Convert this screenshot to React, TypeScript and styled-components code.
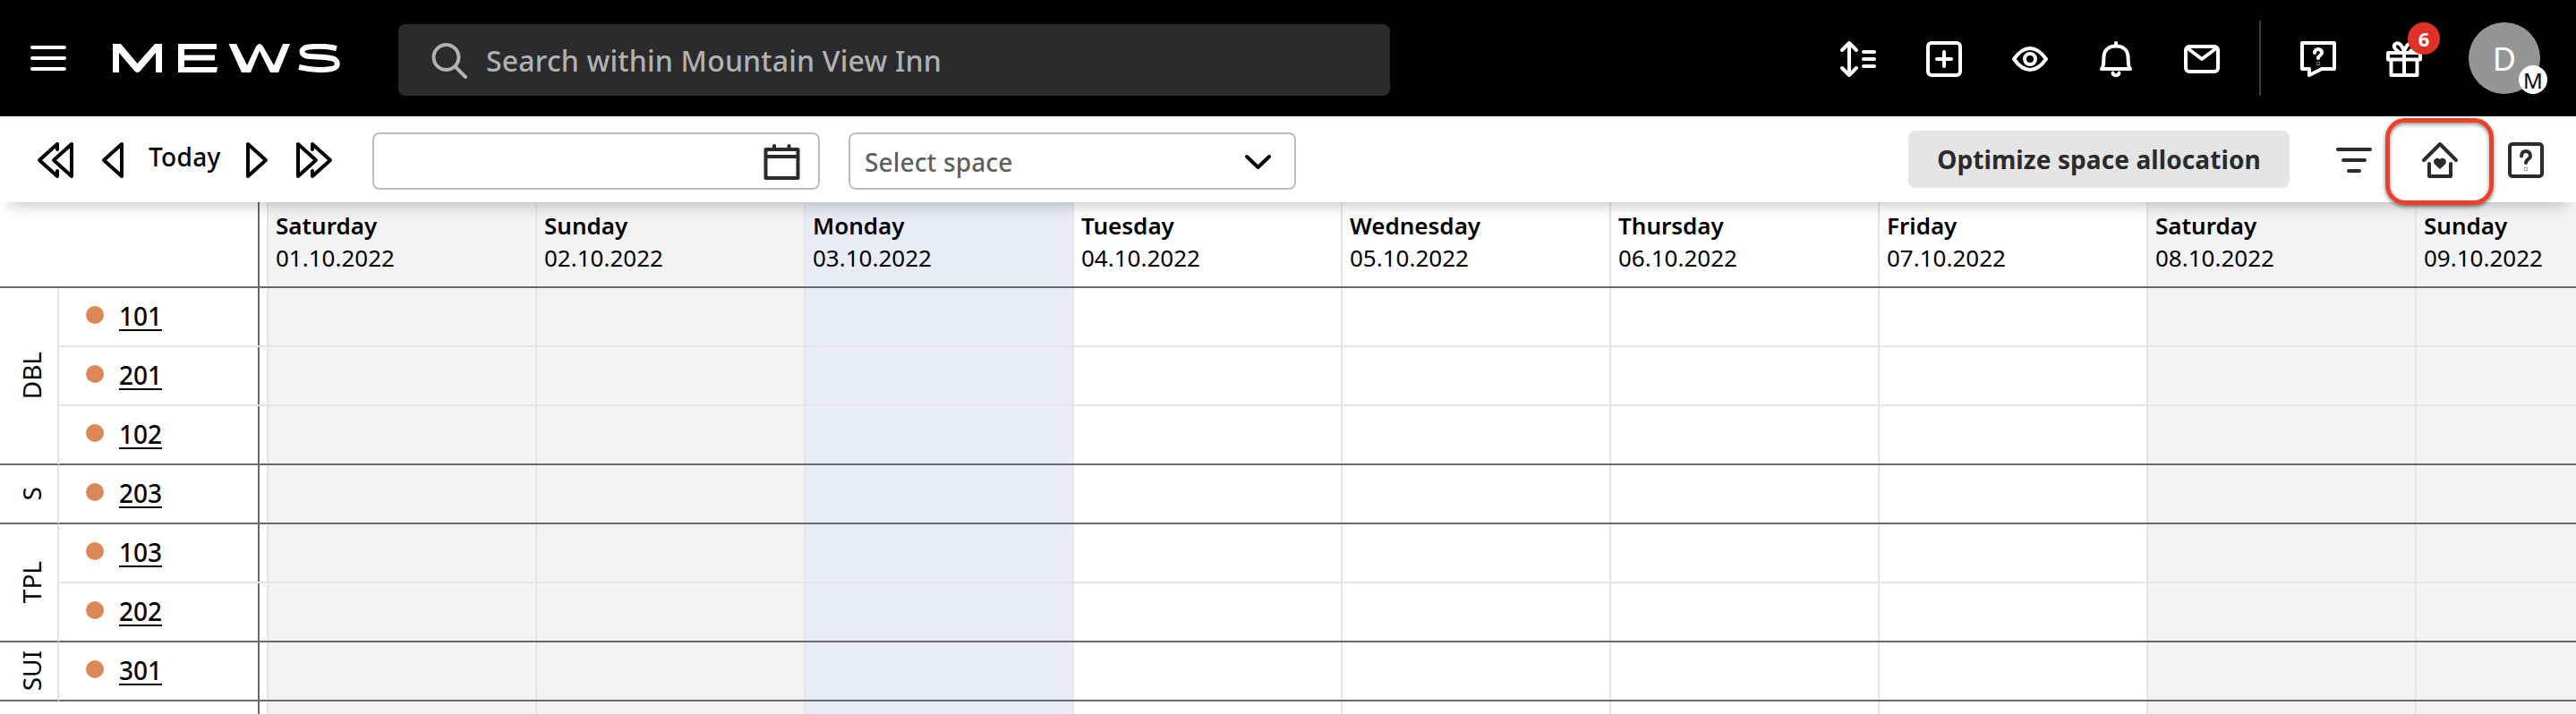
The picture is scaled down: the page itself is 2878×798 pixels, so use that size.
import * as React from 'react';
import styled, { createGlobalStyle } from 'styled-components';

interface Day {
    name: string;
    date: string;
    kind?: 'weekend' | 'today';
}

interface SpaceGroup {
    label: string;
    spaces: string[];
}

const days: Day[] = [
    { name: 'Saturday', date: '01.10.2022', kind: 'weekend' },
    { name: 'Sunday', date: '02.10.2022', kind: 'weekend' },
    { name: 'Monday', date: '03.10.2022', kind: 'today' },
    { name: 'Tuesday', date: '04.10.2022' },
    { name: 'Wednesday', date: '05.10.2022' },
    { name: 'Thursday', date: '06.10.2022' },
    { name: 'Friday', date: '07.10.2022' },
    { name: 'Saturday', date: '08.10.2022', kind: 'weekend' },
    { name: 'Sunday', date: '09.10.2022', kind: 'weekend' },
];

const groups: SpaceGroup[] = [
    { label: 'DBL', spaces: ['101', '201', '102'] },
    { label: 'S', spaces: ['203'] },
    { label: 'TPL', spaces: ['103', '202'] },
    { label: 'SUI', spaces: ['301'] },
];

const DayCells = () => (
    <Cells>
        {days.map((day) => (
            <Cell key={day.date} $kind={day.kind} />
        ))}
    </Cells>
);

export default function App() {
    return (
        <Page>
            <GlobalStyle />
            <Header>
                <MenuButton aria-label="Menu">
                    <Icon width="40" height="28" viewBox="0 0 40 28">
                        <path d="M2 2H38M2 14H38M2 26H38" />
                    </Icon>
                </MenuButton>
                <Logo width="254" height="32" viewBox="0 0 254 32" aria-label="Mews">
                    <path d="M0 32V0H9L27.5 22L47 0H55V32H48V10L31 30Q27.500 34 24 30L7 10V32Z" />
                    <path d="M73 0H116V6H80V12.500H114V18.500H80V26H117L116 32H73Z" />
                    <path d="M129.500 0H138L150 24L160 3Q164 -3 168 3L180 24L190 0H198L185 32H176L164 8L154 32H144Z" />
                    <path
                        d="M250 5C239 2.500 227 2.500 219 3.500C209 4.500 209 13 219 14C228 15 234 14 244 16C253 18 253 27 244 28C233 30 221 29 208 26"
                        fill="none"
                        stroke="#fff"
                        strokeWidth="6"
                    />
                </Logo>
                <Search>
                    <Icon width="40" height="40" viewBox="0 0 40 40">
                        <circle cx="16.500" cy="16" r="14" />
                        <path d="M27 27L38 38" />
                    </Icon>
                    <span>Search within Mountain View Inn</span>
                </Search>
                <HeaderActions>
                    <Icon width="40" height="40" viewBox="0 0 40 40">
                        <path d="M10 2V38M2 10L10 2L18 10M2 30L10 38L18 30M26 12H38M26 20H38M26 28H38" />
                    </Icon>
                    <Icon width="40" height="40" viewBox="0 0 40 40">
                        <rect x="2" y="2" width="36" height="36" rx="4" />
                        <path d="M20 12V28M12 20H28" />
                    </Icon>
                    <Icon width="40" height="40" viewBox="0 0 40 40">
                        <path d="M2 20C7 13 13 8 20 8S33 13 38 20C33 27 27 32 20 32S7 27 2 20Z" />
                        <circle cx="20" cy="20" r="6" />
                    </Icon>
                    <Icon width="40" height="40" viewBox="0 0 40 40">
                        <path d="M20 2V5M4 31H36C33 28 34 22 33.500 17C33 9 27 5.500 20 5.500S7 9 6.500 17C6 22 7 28 4 31Z" />
                        <path d="M16.500 35.500C17 39 23 39 23.500 35.500" />
                    </Icon>
                    <Icon width="40" height="40" viewBox="0 0 40 40">
                        <rect x="2" y="6" width="36" height="28" rx="4" />
                        <path d="M4 8L20 20L36 8" />
                    </Icon>
                    <Divider />
                    <Icon width="40" height="40" viewBox="0 0 40 40">
                        <path d="M2 2H38V31H24L10 38V31H2Z" />
                        <path d="M16 13C16 7.500 24 7.500 24 13C24 16 20 16 20 19" />
                        <circle cx="20" cy="25" r=".2" />
                    </Icon>
                    <Gift>
                        <Icon width="40" height="40" viewBox="0 0 40 40">
                            <path d="M2 13H38V20.500H2ZM5.500 21V38H34.500V21M20 13V38" />
                            <path d="M20 11C18 6 15 1 11 2.500C7 4.500 9 9 13 11M20 11C22 6 25 1 29 2.500C33 4.500 31 9 27 11" />
                        </Icon>
                        <Count>6</Count>
                    </Gift>
                    <Avatar>
                        D
                        <AvatarMark>M</AvatarMark>
                    </Avatar>
                </HeaderActions>
            </Header>

            <Toolbar>
                <DateNav>
                    <Icon width="40" height="40" viewBox="0 0 40 40">
                        <path d="M38 2V38L18 20ZM22 8V2L2 20L22 38V32" />
                    </Icon>
                    <Icon width="24" height="40" viewBox="0 0 24 40">
                        <path d="M22 2V38L2 20Z" />
                    </Icon>
                    <Today>Today</Today>
                    <Icon width="24" height="40" viewBox="0 0 24 40">
                        <path d="M2 2V38L22 20Z" />
                    </Icon>
                    <Icon width="40" height="40" viewBox="0 0 40 40">
                        <path d="M2 2V38L22 20ZM18 8V2L38 20L18 38V32" />
                    </Icon>
                </DateNav>
                <Field>
                    <Icon width="40" height="40" viewBox="0 0 40 40" $color="#2b2b2d">
                        <path d="M1.500 7H37.500V39H1.500ZM1.500 15H37.500M11 3V7M27.500 3V7" />
                    </Icon>
                </Field>
                <Field>
                    <Placeholder>Select space</Placeholder>
                    <Icon width="40" height="40" viewBox="0 0 40 40" $color="#000">
                        <path d="M7 15L19.500 27L32 15" />
                    </Icon>
                </Field>
                <OptimizeButton>Optimize space allocation</OptimizeButton>
                <ToolbarIcons>
                    <Icon width="40" height="40" viewBox="0 0 40 40" $color="#2b2b2d">
                        <path d="M2 8H38M8 20H32M14 32H26" />
                    </Icon>
                    <Highlighted>
                        <Icon width="40" height="40" viewBox="0 0 40 40" $color="#2b2b2d">
                            <path d="M2 20L20 2L38 20M8 24V38H32V24" />
                            <Heart d="M20 30L14.500 25C10.500 20.500 16 15.500 20 19C24 15.500 29.500 20.500 25.500 25Z" />
                        </Icon>
                    </Highlighted>
                    <Icon width="40" height="40" viewBox="0 0 40 40" $color="#2b2b2d">
                        <rect x="2" y="2" width="36" height="36" rx="3" />
                        <path d="M15 15.500C15 8 25 8 25 15.500C25 19 20 19 20 23" />
                        <circle cx="20" cy="30" r=".2" />
                    </Icon>
                </ToolbarIcons>
            </Toolbar>

            <Timeline>
                <TimelineHead>
                    <Corner />
                    <Cells>
                        {days.map((day) => (
                            <Cell key={day.date} $kind={day.kind}>
                                <DayName>{day.name}</DayName>
                                <DayDate>{day.date}</DayDate>
                            </Cell>
                        ))}
                    </Cells>
                </TimelineHead>
                {groups.map((group) => (
                    <Group key={group.label}>
                        <GroupLabel>
                            <span>{group.label}</span>
                        </GroupLabel>
                        <Rows>
                            {group.spaces.map((space) => (
                                <Row key={space}>
                                    <Space>
                                        <Dot />
                                        <SpaceLink>{space}</SpaceLink>
                                    </Space>
                                    <DayCells />
                                </Row>
                            ))}
                        </Rows>
                    </Group>
                ))}
                <TimelineEnd>
                    <Corner />
                    <DayCells />
                </TimelineEnd>
            </Timeline>
        </Page>
    );
}

const GlobalStyle = createGlobalStyle`
    *, *::before, *::after {
        box-sizing: border-box;
    }

    body {
        margin: 0;
        background: #fff;
        color: #000;
        font-family: 'Noto Sans', 'Open Sans', sans-serif;
    }
`;

const Page = styled.div`
    display: flex;
    flex-direction: column;
    width: 2878px;
    height: 798px;
    overflow: hidden;
`;

const Icon = styled.svg<{ $color?: string }>`
    display: block;
    flex: none;
    overflow: visible;
    fill: none;
    stroke: ${({ $color }) => $color || 'currentColor'};
    stroke-width: 4px;
    stroke-linecap: round;
    stroke-linejoin: round;
`;

const Heart = styled.path`
    fill: #2b2b2d;
    stroke: none;
`;

const Header = styled.header`
    display: flex;
    align-items: center;
    flex: none;
    height: 130px;
    padding: 0 40px 0 34px;
    background: #000;
    color: #fff;
`;

const MenuButton = styled.button`
    padding: 0;
    border: none;
    background: none;
    color: #fff;
`;

const Logo = styled.svg`
    margin-left: 52px;
    fill: #fff;
`;

const Search = styled.div`
    display: flex;
    align-items: center;
    gap: 21px;
    width: 1108px;
    height: 80px;
    margin: 4px 0 0 65px;
    padding: 1px 0 0 37px;
    border-radius: 8px;
    background: #2b2b2d;
    color: #b1b1b1;
    font-size: 32px;
    font-weight: 500;
    letter-spacing: 0.18px;
`;

const HeaderActions = styled.div`
    display: flex;
    align-items: center;
    gap: 56px;
    margin-left: auto;

    > svg {
        margin-top: 2px;
    }
`;

const Divider = styled.div`
    width: 2px;
    height: 84px;
    margin: 0 -12px;
    background: #3a3a3a;
`;

const Gift = styled.div`
    position: relative;
    margin: 2px -4px 0 0;
`;

const Count = styled.span`
    position: absolute;
    top: -21px;
    left: 24px;
    width: 36px;
    height: 36px;
    border-radius: 50%;
    background: #de3226;
    font-size: 22px;
    font-weight: 700;
    line-height: 36px;
    text-align: center;
`;

const Avatar = styled.div`
    position: relative;
    width: 80px;
    height: 80px;
    border-radius: 50%;
    background: #959596;
    font-size: 36px;
    line-height: 82px;
    text-align: center;
`;

const AvatarMark = styled.span`
    position: absolute;
    right: -8px;
    bottom: 0;
    width: 32px;
    height: 32px;
    border-radius: 50%;
    background: #fff;
    color: #000;
    font-size: 24px;
    line-height: 33px;
`;

const Toolbar = styled.div`
    position: relative;
    z-index: 1;
    display: flex;
    align-items: center;
    flex: none;
    height: 96px;
    padding: 0 36px 0 42px;
    background: #fff;
    box-shadow: 0 14px 16px -10px rgba(0, 0, 0, 0.22);
`;

const DateNav = styled.div`
    display: flex;
    align-items: center;
    gap: 32px;
    width: 374px;
    padding-top: 2px;
`;

const Today = styled.span`
    width: 82px;
    margin: -8px -5px 0 -4px;
    font-size: 28px;
    font-weight: 500;
    line-height: 36px;
    letter-spacing: 0.3px;
`;

const Field = styled.div`
    display: flex;
    align-items: center;
    justify-content: space-between;
    width: 500px;
    height: 64px;
    margin: 4px 32px 0 0;
    padding: 0 20px 0 16px;
    border: 2px solid #bebebe;
    border-radius: 8px;
    color: #5f5f5f;

    svg {
        margin-left: auto;
    }
`;

const Placeholder = styled.span`
    padding-top: 2px;
    font-size: 28px;
    font-weight: 500;
    letter-spacing: 0.15px;
`;

const OptimizeButton = styled.button`
    width: 426px;
    height: 64px;
    margin-left: auto;
    padding: 0;
    border: none;
    border-radius: 8px;
    background: #e5e5e5;
    color: #2b2b2d;
    font-family: inherit;
    font-size: 28px;
    font-weight: 700;
    letter-spacing: 0.1px;
`;

const ToolbarIcons = styled.div`
    display: flex;
    align-items: center;
    gap: 16px;
    margin-left: 52px;
    padding-top: 2px;
`;

/* callout frame reaches over the edge of the toolbar */
const Highlighted = styled.div`
    display: flex;
    align-items: center;
    justify-content: center;
    width: 121px;
    height: 97px;
    margin: 3px 0 0 -1px;
    padding-bottom: 3px;
    border: 5px solid #ec4126;
    border-radius: 22px;
    box-shadow: 0 2px 4px rgba(0, 0, 0, 0.5), inset 0 2px 4px rgba(0, 0, 0, 0.45);
`;

const Timeline = styled.div`
    display: flex;
    flex-direction: column;
    flex: 1;
`;

const TimelineHead = styled.div`
    display: flex;
    height: 96px;
    border-bottom: 2px solid #6a6a6c;
`;

const Corner = styled.div`
    flex: none;
    width: 290px;
    border-right: 2px solid #6a6a6c;
`;

const Cells = styled.div`
    display: flex;
    flex: 1;
    padding-left: 8px;
    overflow: hidden;
`;

const cellColors = {
    weekend: '#f3f3f3',
    today: '#e9ecf7',
};

const Cell = styled.div<{ $kind?: 'weekend' | 'today' }>`
    flex: none;
    width: 300px;
    padding: 8px 0 0 8px;
    border-left: 2px solid #e5e5e5;
    background: ${({ $kind }) => ($kind ? cellColors[$kind] : '#fff')};
`;

const DayName = styled.div`
    font-size: 26px;
    font-weight: 600;
    line-height: 36px;
`;

const DayDate = styled.div`
    font-size: 26px;
    line-height: 36px;
`;

const Group = styled.div`
    display: flex;
`;

const GroupLabel = styled.div`
    display: flex;
    align-items: center;
    justify-content: center;
    width: 66px;
    border-right: 2px solid #e5e5e5;
    border-bottom: 2px solid #6a6a6c;
    font-size: 28px;

    span {
        margin-left: 6px;
        writing-mode: vertical-rl;
        transform: rotate(180deg);
    }
`;

const Rows = styled.div`
    flex: 1;
    min-width: 0;
    border-bottom: 2px solid #6a6a6c;
`;

const Row = styled.div`
    display: flex;
    height: 66px;
    border-bottom: 2px solid #e5e5e5;

    &:last-child {
        height: 64px;
        border-bottom: none;
    }
`;

const Space = styled.div`
    display: flex;
    align-items: center;
    gap: 17px;
    flex: none;
    width: 224px;
    padding-left: 30px;
    border-right: 2px solid #6a6a6c;
`;

const Dot = styled.span`
    width: 20px;
    height: 20px;
    margin-bottom: 4px;
    border-radius: 50%;
    background: #dc8758;
`;

const SpaceLink = styled.a`
    height: 28px;
    margin-top: 4px;
    border-bottom: 2px solid #000;
    font-size: 28px;
    font-weight: 500;
    line-height: 22px;
`;

const TimelineEnd = styled.div`
    display: flex;
    flex: 1;
`;
